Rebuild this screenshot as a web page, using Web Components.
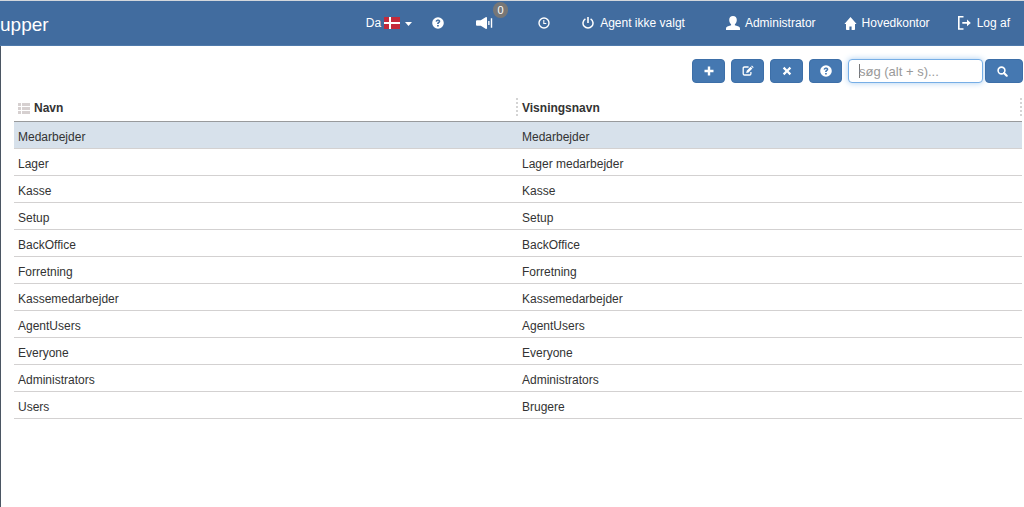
<!DOCTYPE html>
<html lang="da">
<head>
<meta charset="utf-8">
<meta name="viewport" content="width=device-width, initial-scale=1">
<title>Grupper</title>
<style>
  html { height: 100%; }
  body {
    margin: 0; min-height: 100%; display: flex; flex-direction: column;
    overflow-x: hidden; background: #fff; color: #333;
    font: 12px/16px "Liberation Sans", Arial, sans-serif;
    --bar: #416c9f; --accent: #4578b1;
  }
  main { flex: 1; border-left: 1px solid #4b5663; padding: 13px 1px 0 13px; }
</style>
</head>
<body>
<app-header heading="upper">
  <nav-item icon="help" label="Hjælp"></nav-item>
  <nav-item icon="sound" label="Beskeder" badge="0"></nav-item>
  <nav-item icon="clock" label="Tid"></nav-item>
  <nav-item icon="power">Agent ikke valgt</nav-item>
  <nav-item icon="user">Administrator</nav-item>
  <nav-item icon="home">Hovedkontor</nav-item>
  <nav-item icon="logout">Log af</nav-item>
</app-header>
<main>
  <tool-bar></tool-bar>
  <data-grid></data-grid>
</main>
<script>
const ICONS = {
  help: [12, 12, '<path fill-rule="evenodd" d="M6 .2A5.8 5.8 0 1 0 6 11.8 5.8 5.8 0 0 0 6 .2ZM5.1 7.1V6.4C5.1 5.4 6.7 5.2 6.7 4.3 6.7 3.6 5.3 3.5 5.1 4.7L3.6 4.4C3.9 1.7 8.3 1.8 8.3 4.2 8.3 5.8 6.7 5.8 6.7 7.1ZM5.1 7.9H6.8V9.5H5.1Z"/>'],
  sound: [17, 12, '<path d="M0 4.2Q0 3.2 1 3.2H4.8L9.6.2Q11 -.4 11 1V11Q11 12.4 9.6 11.8L4.8 8.8H1Q0 8.8 0 7.8Z"/><path d="M12.2 4h1.3v4h-1.3zM14.8 1.2h1.4v9.6h-1.4z"/>'],
  clock: [12, 12, '<circle cx="6" cy="6" r="5" fill="none" stroke="currentColor" stroke-width="1.4"/><path d="M5.8 3v3.5h2.5" fill="none" stroke="currentColor" stroke-width="1.1"/>'],
  power: [12, 12, '<path d="M3.4 1.8A5 5 0 1 0 8.6 1.8" fill="none" stroke="currentColor" stroke-width="1.5"/><path d="M5.2.1h1.6v6H5.2z"/>'],
  user: [14, 14, '<path d="M7 0C9.4 0 10.8 1.5 10.8 3.9 10.8 5.8 10 7.3 8.9 8.2V9.2L12.6 10.4Q14 11 14 12.6V14H0V12.6Q0 11 1.4 10.4L5.1 9.2V8.2C4 7.3 3.2 5.8 3.2 3.9 3.2 1.5 4.6 0 7 0Z"/>'],
  home: [13, 13, '<path d="M6.5 0 12.6 7H11V12.2Q11 13 10.2 13H7.6V9.6H5.4V13H2.8Q2 13 2 12.2V7H.4Z"/>'],
  logout: [13, 14, '<path d="M5.5.8H.8V13H5.5M4.3 6.9H11" fill="none" stroke="currentColor" stroke-width="1.6"/><path d="M9 3.5 12.8 6.9 9 10.3Z"/>'],
  plus: [10, 10, '<path d="M3.8.5h2.4v3.3h3.3v2.4H6.2v3.3H3.8V6.2H.5V3.8h3.3z"/>'],
  edit: [12, 12, '<path d="M6.6 2H2.5Q1.2 2 1.2 3.3V8.7Q1.2 10 2.5 10H7.6Q8.9 10 8.9 8.7V7" fill="none" stroke="currentColor" stroke-width="1.3"/><path d="M4.2 8 4.7 5.7 8.6 1.8 10.4 3.6 6.5 7.5ZM9.1 1.3 9.9.5 11.7 2.3 10.9 3.1Z"/>'],
  close: [10, 10, '<path d="M2.4.8 5 3.4 7.6.8 9.2 2.4 6.6 5 9.2 7.6 7.6 9.2 5 6.6 2.4 9.2.8 7.6 3.4 5 .8 2.4Z"/>'],
  search: [11, 11, '<circle cx="4.5" cy="4.5" r="3.4" fill="none" stroke="currentColor" stroke-width="1.6"/><path d="M7 7 9.7 9.7" stroke="currentColor" stroke-width="2.2" stroke-linecap="round"/>'],
  list: [12, 11, '<path d="M0 0h3v3H0zM4 0h8v3H4zM0 4h3v3H0zM4 4h8v3H4zM0 8h3v3H0zM4 8h8v3H4z"/>'],
  flag: [16, 12, '<path fill="#c42a3a" d="M0 0h16v12H0z"/><path fill="#fff" d="M5 0h2v12H5zM0 5h16v2H0z"/>'],
  caret: [7, 4, '<path d="M0 0h7L3.5 4z"/>']
};

class UiElement extends HTMLElement {
  connectedCallback() {
    if (!this.shadowRoot) this.attachShadow({ mode: 'open' }).innerHTML = this.render();
  }
}

customElements.define('ui-icon', class extends UiElement {
  render() {
    const [w, h, body] = ICONS[this.getAttribute('name')];
    return `<style>:host{display:block;flex:none}svg{display:block}</style>
      <svg width="${w}" height="${h}" viewBox="0 0 ${w} ${h}" fill="currentColor" aria-hidden="true">${body}</svg>`;
  }
});

customElements.define('nav-item', class extends UiElement {
  render() {
    const badge = this.getAttribute('badge');
    const label = this.getAttribute('label');
    return `<style>
        :host{display:block}
        a{position:relative;display:flex;align-items:center;gap:5px;color:#fff;text-decoration:none;white-space:nowrap}
        :host([icon=power]) a,:host([icon=logout]) a{gap:6px}
        .badge{position:absolute;left:17px;bottom:11px;width:15px;line-height:16px;border-radius:8px;
          background:#777;color:#fff;text-align:center;font-size:11px}
      </style>
      <a href="#"${label ? ` aria-label="${label}"` : ''}><ui-icon name="${this.getAttribute('icon')}"></ui-icon><slot></slot>${
        badge ? `<span class="badge">${badge}</span>` : ''}</a>`;
  }
});

customElements.define('app-header', class extends UiElement {
  render() {
    return `<style>
        :host{display:block;background:var(--bar);color:#fff;border-top:1px solid #d3d7dc;border-bottom:1px solid #4f7aab}
        header{display:flex;align-items:center;height:44px;padding-right:14px}
        h1{flex:1;margin:0;padding-top:4px;font-size:19px;line-height:24px;font-weight:400}
        button{display:flex;align-items:center;gap:3px;margin-right:20px;padding:0;border:0;background:none;color:inherit;font:inherit}
        ui-icon[name=caret]{margin-left:2px;padding-top:2px}
        nav{display:flex;align-items:center;gap:28px}
        ::slotted([icon=sound]){margin-left:4px}
        ::slotted([icon=clock]){margin-left:17px}
        ::slotted([icon=power]){margin-left:4px}
        ::slotted([icon=user]){margin-left:13px}
      </style>
      <header>
        <h1>${this.getAttribute('heading')}</h1>
        <button type="button" aria-haspopup="true">Da<ui-icon name="flag"></ui-icon><ui-icon name="caret"></ui-icon></button>
        <nav><slot></slot></nav>
      </header>`;
  }
});

customElements.define('tool-button', class extends UiElement {
  render() {
    return `<style>
        :host{display:block;width:33px}
        button{display:flex;align-items:center;justify-content:center;width:100%;height:24px;padding:0;
          border:1px solid #3d6fa8;border-radius:4px;background:var(--accent);color:#fff}
        :host([icon=search]) button{padding-right:4px}
      </style>
      <button type="button" aria-label="${this.getAttribute('label')}"><ui-icon name="${this.getAttribute('icon')}"></ui-icon></button>`;
  }
});

customElements.define('tool-bar', class extends UiElement {
  render() {
    return `<style>
        :host{display:block}
        form{display:flex;justify-content:flex-end;gap:6px}
        .search{display:flex;gap:2px}
        .search tool-button{width:38px}
        input{box-sizing:border-box;width:135px;height:24px;margin:0;padding:0 10px;border:1px solid #76aee6;border-radius:4px;
          outline:0;box-shadow:0 0 6px #a9cdf0;font:13px "Liberation Sans",Arial,sans-serif;color:#333;
          background:linear-gradient(#777,#777) 10px 4px/1px 14px no-repeat #fff}
        input::placeholder{color:#999;opacity:1}
      </style>
      <form role="search">
        <tool-button icon="plus" label="Tilføj"></tool-button>
        <tool-button icon="edit" label="Rediger"></tool-button>
        <tool-button icon="close" label="Slet"></tool-button>
        <tool-button icon="help" label="Hjælp"></tool-button>
        <div class="search">
          <input type="text" accesskey="s" aria-label="Søg" placeholder="søg (alt + s)...">
          <tool-button icon="search" label="Søg"></tool-button>
        </div>
      </form>`;
  }
});

const GROUPS = [
  ['Medarbejder', 'Medarbejder'], ['Lager', 'Lager medarbejder'], ['Kasse', 'Kasse'],
  ['Setup', 'Setup'], ['BackOffice', 'BackOffice'], ['Forretning', 'Forretning'],
  ['Kassemedarbejder', 'Kassemedarbejder'], ['AgentUsers', 'AgentUsers'],
  ['Everyone', 'Everyone'], ['Administrators', 'Administrators'], ['Users', 'Brugere']
];

customElements.define('data-grid', class extends UiElement {
  render() {
    return `<style>
        :host{display:block;padding:11px 1px 0 0}
        table{width:100%;table-layout:fixed;border-collapse:separate;border-spacing:0}
        th,td{box-sizing:border-box;padding:3px 4px 0;text-align:left}
        th{height:28px;padding-top:1px;border-bottom:1px solid #989a9c;
          background:repeating-linear-gradient(#d4d4d4 0 2px,transparent 2px 4px) right 4px/2px 20px no-repeat}
        th div{display:flex;align-items:center;gap:4px}
        ui-icon{color:#d6d0d0}
        td{height:27px;border-bottom:1px solid #d3d1d1}
        .selected td{background:#d7e1eb}
      </style>
      <table>
        <thead><tr>
          <th scope="col"><div><ui-icon name="list"></ui-icon>Navn</div></th>
          <th scope="col">Visningsnavn</th>
        </tr></thead>
        <tbody>${GROUPS.map(([name, shown], i) =>
          `<tr${i ? '' : ' class="selected"'}><td>${name}</td><td>${shown}</td></tr>`).join('')}</tbody>
      </table>`;
  }
});
</script>
</body>
</html>
